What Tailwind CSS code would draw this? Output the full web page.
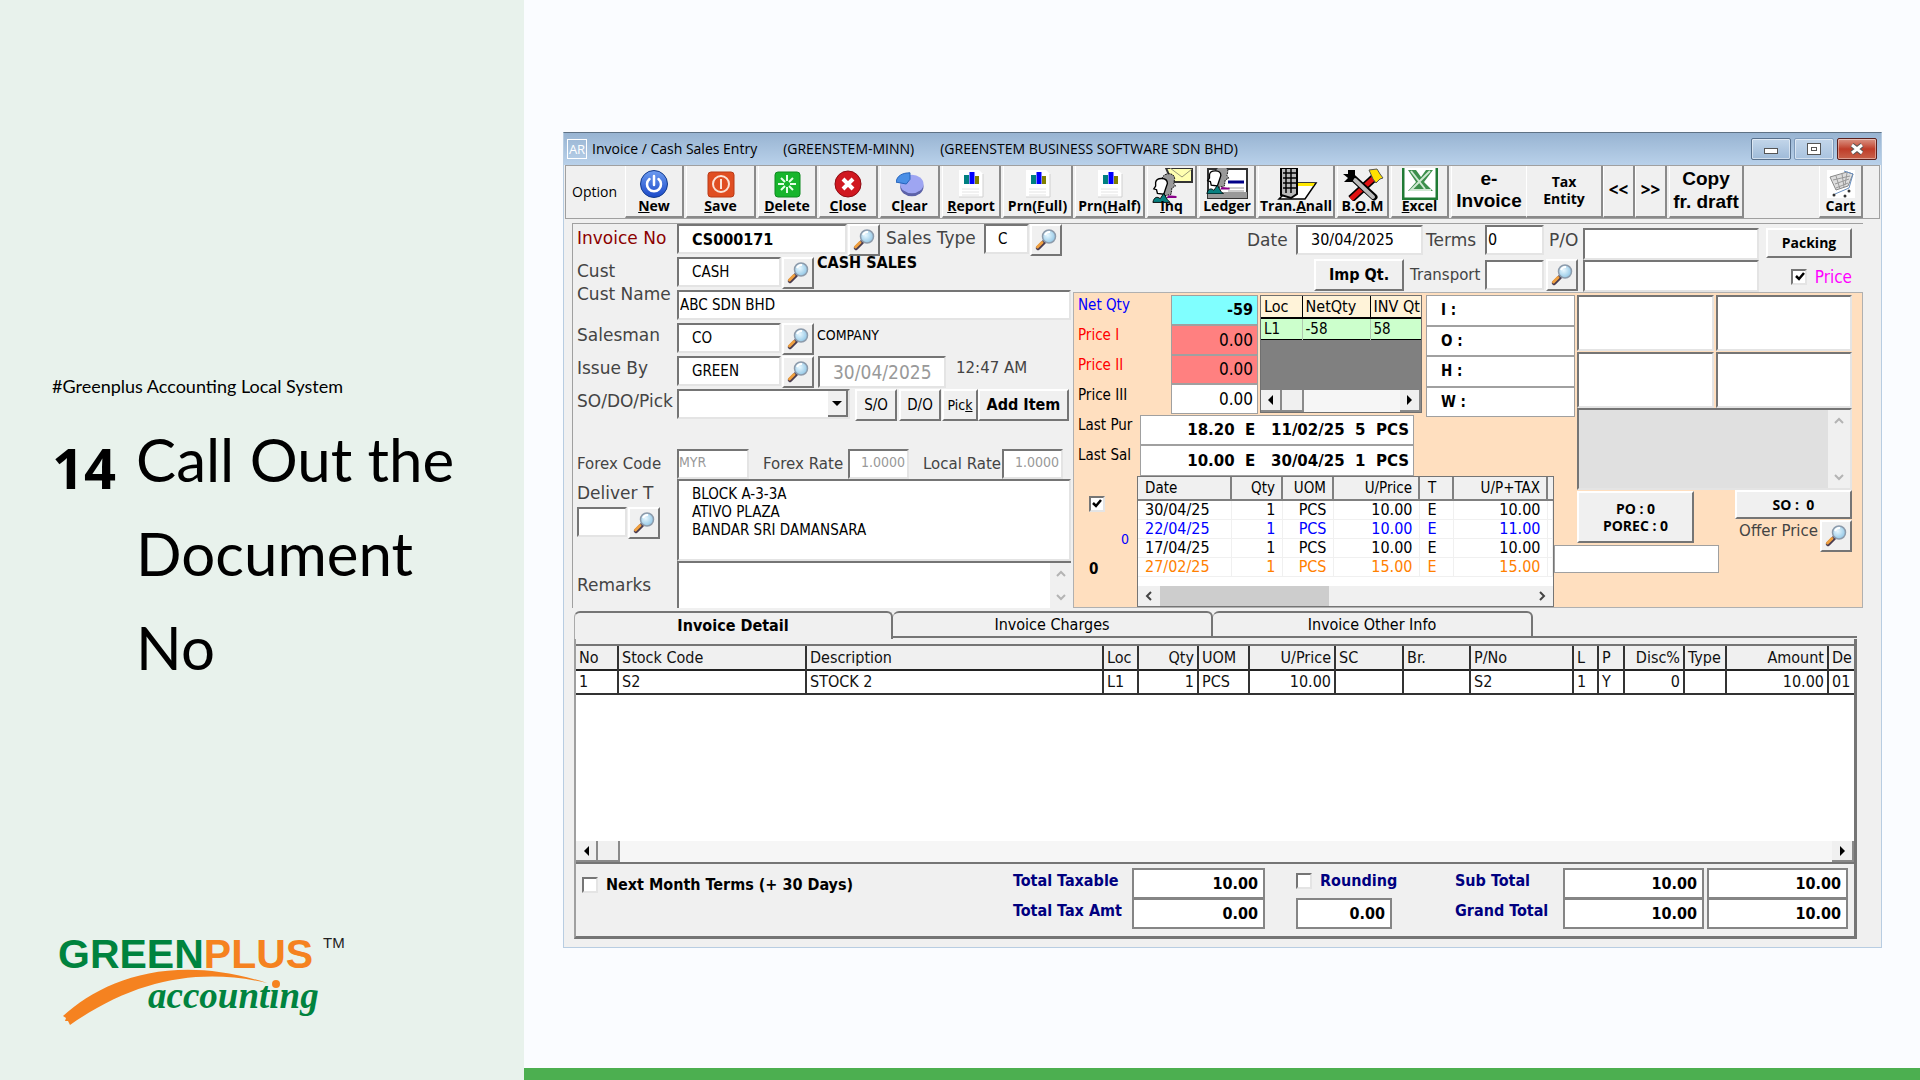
<!DOCTYPE html>
<html lang="en">
<head>
  <meta charset="UTF-8" />
  <title>Greenplus Accounting - Call Out the Document No</title>
  <meta name="viewport" content="width=device-width, initial-scale=1.0" />
  <script src="https://cdn.jsdelivr.net/npm/@tailwindcss/browser@4"></script>
</head>
<body class="flex min-h-screen bg-[#fafcff] text-black">

  <!-- Shared icons -->
  <svg class="absolute h-0 w-0">
    <defs>
      <radialGradient id="glass" cx="40%" cy="40%" r="65%">
        <stop offset="0" stop-color="#e8f8ff" />
        <stop offset="1" stop-color="#8ec4e4" />
      </radialGradient>
      <linearGradient id="blueBall" x1="0" y1="0" x2="0" y2="1">
        <stop offset="0" stop-color="#6d9cf0" />
        <stop offset="1" stop-color="#1b49c8" />
      </linearGradient>
    </defs>
    <symbol id="lens" viewBox="0 0 24 24">
      <path d="M4 20 L10 14" stroke="#4a3c50" stroke-width="4.500" stroke-linecap="round" />
      <path d="M3.500 19 L8 14.500" stroke="#f0a040" stroke-width="3" stroke-linecap="round" />
      <circle cx="15" cy="8.500" r="6.500" fill="url(#glass)" stroke="#8d9bab" stroke-width="1.500" />
      <path d="M11 7a5 5 0 0 1 5-3" stroke="#fff" stroke-width="2" fill="none" />
    </symbol>
    <symbol id="report" viewBox="0 0 28 28">
      <path d="M2 0h20l4 4v23H2z" fill="#fff" />
      <path d="M2 27h24V4" fill="none" stroke="#d0d0d0" />
      <path d="M7 5h5v9H7z" fill="#008080" />
      <path d="M12.500 2h5v12h-5z" fill="#00f" />
      <path d="M18 6h4v8h-4z" fill="#808000" />
      <path d="M5 19h17M5 22h17M5 25h17" stroke="#e4e4e4" />
    </symbol>
    <symbol id="people" viewBox="0 0 32 34">
      <path d="M11 8c1-7 14-8 14 0l-1 5 2 3-4 2-1 7-8 2z" fill="#999" stroke="#000" stroke-dasharray="2 1" />
      <path d="M18 26l9 1v2H16z" fill="#808" />
      <path d="M4 12C5 6 17 6 17 13l-2 6-2 6-7-1-1-4-3-1 2-3z" fill="#fff" stroke="#000" stroke-width="1.500" />
      <path d="M1 34c1-6 5-7 8-4l4-6 4 7 3 3z" fill="#088080" stroke="#000" />
    </symbol>
  </svg>

  <aside class="flex w-[524px] shrink-0 flex-col bg-[#e8f2ec] px-[52px] font-['Lato',sans-serif]">
    <p class="mt-[372px] text-[18px] leading-7">#Greenplus Accounting Local System</p>
    <h1 class="mt-3 flex gap-5 text-[60px] leading-[94px]">
      <b class="pt-2 font-['Open_Sans',sans-serif] text-[56px]">14</b>
      <span>Call Out the Document No</span>
    </h1>
    <svg class="mt-auto mb-[50px] h-[100px] w-[300px]" viewBox="0 0 300 100">
      <g font-family="Liberation Sans, sans-serif">
        <text x="6" y="38" font-size="41" font-weight="700" fill="#00833e">GREEN<tspan fill="#f58220">PLUS</tspan></text>
        <text x="271" y="18" font-size="15" fill="#222">TM</text>
      </g>
      <path d="M11 86C50 50 120 22 215 53C150 38 85 48 18 95L16 91L13 91L14 88Z" fill="#f58220" />
      <text x="96" y="78" font-family="Liberation Serif, serif" font-size="37" font-style="italic" font-weight="700" fill="#00833e">accountıng</text>
      <circle cx="224" cy="54" r="4" fill="#f58220" />
    </svg>
  </aside>

  <main class="flex flex-1 flex-col border-b-[12px] border-[#4caf50] pt-[132px] pr-[38px] pl-[39px]">
    <div class="flex flex-col border border-t-[#5f7285] border-[#b8cde2] bg-[#f0f0f0] pb-2 font-['DejaVu_Sans_Condensed','DejaVu_Sans',sans-serif] text-[15px] leading-5 whitespace-nowrap">

      <!-- Title bar -->
      <header class="flex h-8 items-center bg-linear-to-b from-[#98b4d2] to-[#b9d1ea] pr-1 pl-[3px] font-['Open_Sans',sans-serif] text-[14px]">
        <span class="mr-[5px] flex h-5 w-5 items-center justify-center border border-white text-[13px] text-white">AR</span>
        <span>Invoice / Cash Sales Entry</span>
        <span class="ml-[26px]">(GREENSTEM-MINN)</span>
        <span class="ml-[26px]">(GREENSTEM BUSINESS SOFTWARE SDN BHD)</span>
        <div class="ml-auto flex gap-[3px]">
          <button aria-label="Minimize" class="flex h-[22px] w-10 items-center justify-center rounded-xs border border-[#58708c] bg-linear-to-b from-[#c3d6ea] to-[#9ebad8] ring-1 ring-white/50 ring-inset">
            <span class="mt-1 h-[6px] w-[14px] border border-[#555] bg-white"></span>
          </button>
          <button aria-label="Restore" class="flex h-[22px] w-10 items-center justify-center rounded-xs border border-[#7f9bbb] bg-linear-to-b from-[#c3d6ea] to-[#a9c3df] ring-1 ring-white/50 ring-inset">
            <span class="h-[12px] w-[14px] border border-[#555] bg-white p-[3px]"><span class="block h-1 border border-[#555]"></span></span>
          </button>
          <button aria-label="Close window" class="flex h-[22px] w-10 items-center justify-center rounded-xs border border-[#5a1f1c] bg-linear-to-b from-[#d99384] via-[#bf3c28] to-[#c8614a] ring-1 ring-white/40 ring-inset">
            <svg class="h-3 w-4" viewBox="0 0 16 12"><path d="M3 2l10 8M13 2L3 10" stroke="#555" stroke-width="5" /><path d="M3 2l10 8M13 2L3 10" stroke="#fff" stroke-width="3" /></svg>
          </button>
        </div>
      </header>

      <!-- Toolbar -->
      <nav class="mx-px flex h-[54px] border border-[#a0a0a0] bg-[#f0f0f0] font-['Open_Sans',sans-serif] text-[14px] leading-4 [&>button]:mr-[2px] [&>button]:flex [&>button]:flex-col [&>button]:items-center [&>button]:justify-end [&>button]:border-r-2 [&>button]:border-b-2 [&>button]:border-l [&>button]:border-[#8a8a8a] [&>button]:border-l-white [&>button]:pb-[2px] [&>button]:font-bold [&_svg]:h-7 [&_svg]:w-7">
        <span class="w-[59px] self-center pl-[6px]">Option</span>
        <button class="w-[59px]">
          <svg viewBox="0 0 28 28"><circle cx="14" cy="14" r="13.500" fill="url(#blueBall)" stroke="#123a8c" /><path d="M9.500 9a7 7 0 1 0 9 0M14 6v9" fill="none" stroke="#fff" stroke-width="2.500" stroke-linecap="round" /></svg>
          <span><u>N</u>ew</span>
        </button>
        <button class="w-[70px]">
          <svg viewBox="0 0 28 28"><rect x="1" y="2" width="26" height="25" rx="3" fill="#e04e22" stroke="#b93a17" /><circle cx="14" cy="14" r="8" fill="none" stroke="#fbe3d8" stroke-width="2" /><path d="M14 9v10" stroke="#fbe3d8" stroke-width="2" /></svg>
          <span><u>S</u>ave</span>
        </button>
        <button class="w-[59px]">
          <svg viewBox="0 0 28 28"><rect x="2" y="2" width="25" height="25" rx="3" fill="#17b52c" stroke="#0d8a1e" /><path d="M14 5v6M14 17v6M5 14h6M17 14h6M8 8l4 4M16 16l4 4M20 8l-4 4M12 16l-4 4" stroke="#e6ffe8" stroke-width="2" /></svg>
          <span><u>D</u>elete</span>
        </button>
        <button class="w-[59px]">
          <svg viewBox="0 0 28 28"><circle cx="14" cy="14" r="13" fill="#d01820" stroke="#8d0b12" /><path d="M9 9l10 10M19 9L9 19" stroke="#fff" stroke-width="4" /></svg>
          <span><u>C</u>lose</span>
        </button>
        <button class="w-[60px]">
          <svg viewBox="0 0 30 28"><ellipse cx="17" cy="17" rx="12.500" ry="10" fill="#5c62a8" /><ellipse cx="17" cy="14" rx="12.500" ry="10" fill="#9ea5f2" /><path d="M0 12C1 5 7 2 15 2v7l-4 5z" fill="#4a8fe6" stroke="#205fb8" /></svg>
          <span>C<u>l</u>ear</span>
        </button>
        <button class="w-[59px]"><svg><use href="#report" /></svg><span><u>R</u>eport</span></button>
        <button class="w-[70px]"><svg><use href="#report" /></svg><span>Prn(<u>F</u>ull)</span></button>
        <button class="w-[70px]"><svg><use href="#report" /></svg><span>Prn(<u>H</u>alf)</span></button>
        <button class="relative w-[50px]">
          <svg class="absolute top-[2px] left-1 !h-[36px] !w-[42px]" viewBox="0 0 42 36"><path d="M14 0h26v14H20z" fill="#ffffb0" stroke="#333" stroke-width="2" /><path d="M18 0l12 9L40 1" fill="none" stroke="#997" /><use href="#people" x="0" y="3" width="29" height="32" /></svg>
          <span class="relative"><u>I</u>nq</span>
        </button>
        <button class="relative w-[57px]">
          <svg class="absolute top-[2px] left-1 !h-[32px] !w-[48px]" viewBox="0 0 48 32"><path d="M4 1h39v29H4z" fill="#fff" stroke="#333" stroke-width="2" /><path d="M4 24h39v6H4z" fill="#999" /><path d="M24 14h16" stroke="#008" stroke-width="3" /><path d="M24 20h16M24 23h16" stroke="#999" /><use href="#people" x="2" y="-4" width="28" height="30" /></svg>
          <span class="relative">Ledger</span>
        </button>
        <button class="relative w-[77px]">
          <svg class="absolute top-[2px] left-4 !h-[32px] !w-[44px]" viewBox="0 0 44 32"><path d="M20 15h21L30 31H4z" fill="#fff" stroke="#000" stroke-width="1.500" /><path d="M22 15h18l-2 3H22z" fill="#ffe800" /><path d="M6 0h16v26l-6 4-10-3z" fill="#b8b8b8" stroke="#000" stroke-width="2" /><path d="M8 5h13M8 10h13M8 15h13M8 20h13M11 1v24M16 1v24" stroke="#000" stroke-width="1.500" /></svg>
          <span class="relative">Tran.<u>A</u>nall</span>
        </button>
        <button class="relative w-[52px]">
          <svg class="absolute top-[2px] left-1 !h-[33px] !w-[42px]" viewBox="0 0 42 33"><path d="M34 8L9 31" stroke="#000" stroke-width="8" /><path d="M34 8L9 31" stroke="#e01010" stroke-width="5" /><path d="M10 9l22 20" stroke="#000" stroke-width="7" stroke-linecap="round" /><path d="M13 12l18 17" stroke="#bbb" stroke-width="4" stroke-linecap="round" /><path d="M1 6h5V2h7v7l-3 5H2l4-4z" fill="#000" /><path d="M27 2l8-1 3 5 3 4-3 1-4 4-3-4z" fill="#ffe000" stroke="#555" /></svg>
          <span class="relative">B.<u>O</u>.M</span>
        </button>
        <button class="relative w-[58px]">
          <svg class="absolute top-[2px] left-[10px] !h-[32px] !w-[36px]" viewBox="0 0 36 32"><path d="M1 0v31h34V0" fill="#fff" stroke="#1f7a34" stroke-width="3" /><path d="M6 2h8l5 7 5-7h7L22 14l9 9H6l8-9z" fill="#3d8f4c" /><path d="M9 3l14 18M29 22H9L28 3" stroke="#cfe8d2" stroke-width="2" fill="none" /></svg>
          <span class="relative"><u>E</u>xcel</span>
        </button>
        <button class="!mr-0 w-[75px] !justify-center !border-r-0 font-['Liberation_Sans',sans-serif] text-[19px] leading-[22px]"><span>e-<br />Invoice</span></button>
        <button class="!mr-0 w-[77px] !justify-center leading-[17px]"><span>Tax<br />Entity</span></button>
        <button class="!mr-0 w-8 !justify-center text-[17px]">&lt;&lt;</button>
        <button class="w-8 !justify-center text-[17px]">&gt;&gt;</button>
        <button class="w-[75px] !justify-center font-['Liberation_Sans',sans-serif] text-[19px] leading-[23px]"><span>Copy<br />fr. draft</span></button>
        <button class="!mr-4 ml-auto w-[44px]">
          <svg viewBox="0 0 28 28" class="bg-white"><path d="M3 7l17-5 6 2-5 12-12 4z" fill="#ddd" stroke="#888" /><path d="M6 10l17-4M8 14l14-5M9 18l12-5M9 6l4 13M15 4l2 13M20 3l-2 12" stroke="#999" /><path d="M17 1l9 3-4 14-14 6" fill="none" stroke="#6a90c0" /><circle cx="7" cy="25" r="1.500" fill="#333" /><circle cx="18" cy="26" r="1.500" fill="#333" /><circle cx="22" cy="21" r="1.500" fill="#333" /></svg>
          <span>Car<u>t</u></span>
        </button>
      </nav>

      <!-- Entry form -->
      <form class="mt-1 mr-[18px] ml-2 flex h-[385px] border-t border-l border-[#a0a0a0] font-['DejaVu_Sans',sans-serif] text-[#444] [&_b]:font-['DejaVu_Sans_Condensed',sans-serif] [&_button]:border-2 [&_button]:border-[#757575] [&_button]:border-t-white [&_button]:border-l-white [&_button]:bg-[#f0f0f0] [&_button]:text-black [&_input]:border-2 [&_input]:border-[#e4e4e4] [&_input]:border-t-[#757575] [&_input]:border-l-[#757575] [&_input]:bg-white [&_input]:text-black [&_input::placeholder]:text-[#999]">

        <div class="grid w-[500px] shrink-0 grid-cols-[100px_1fr] grid-rows-[33px_33px_33px_33px_33px_33px_27px_30px_82px_47px] pl-[4px] [&_button]:font-['DejaVu_Sans_Condensed',sans-serif] [&_input]:font-['DejaVu_Sans_Condensed',sans-serif]">
          <label for="invoiceNo" class="text-[17px] leading-7 text-[#8b0000]">Invoice No</label>
          <div class="flex items-start">
            <input id="invoiceNo" class="h-[30px] w-[170px] pl-[13px] text-[16px] font-bold" value="CS000171" />
            <button type="button" aria-label="Find invoice" class="ml-px h-8 w-8 p-[2px]"><svg class="h-6 w-6"><use href="#lens" /></svg></button>
            <label for="salesType" class="ml-[6px] w-[98px] text-[17px] leading-7">Sales Type</label>
            <input id="salesType" class="h-[30px] w-[45px] pl-[12px]" value="C" />
            <button type="button" aria-label="Find sales type" class="ml-px h-8 w-8 p-[2px]"><svg class="h-6 w-6"><use href="#lens" /></svg></button>
          </div>

          <label for="cust" class="text-[17px] leading-7">Cust</label>
          <div class="flex items-start">
            <input id="cust" class="h-[30px] w-[104px] pl-[13px]" value="CASH" />
            <button type="button" aria-label="Find customer" class="ml-px h-8 w-8 p-[2px]"><svg class="h-6 w-6"><use href="#lens" /></svg></button>
            <b class="ml-[3px] text-[16px] leading-3 text-black">CASH SALES</b>
          </div>

          <label for="custName" class="text-[17px] leading-2">Cust Name</label>
          <input id="custName" class="h-[30px] w-[394px] pl-px" value="ABC SDN BHD" />

          <label for="salesman" class="text-[17px] leading-6">Salesman</label>
          <div class="flex items-start">
            <input id="salesman" class="h-[30px] w-[104px] pl-[13px]" value="CO" />
            <button type="button" aria-label="Find salesman" class="ml-px h-8 w-8 p-[2px]"><svg class="h-6 w-6"><use href="#lens" /></svg></button>
            <span class="ml-[3px] font-['DejaVu_Sans_Condensed',sans-serif] text-[14px] leading-6 text-black">COMPANY</span>
          </div>

          <label for="issueBy" class="text-[17px] leading-6">Issue By</label>
          <div class="flex items-start">
            <input id="issueBy" class="h-[30px] w-[104px] pl-[13px]" value="GREEN" />
            <button type="button" aria-label="Find issuer" class="ml-px h-8 w-8 p-[2px]"><svg class="h-6 w-6"><use href="#lens" /></svg></button>
            <input aria-label="Issue date" class="ml-1 h-8 w-[128px] pl-[13px] text-[19px]" placeholder="30/04/2025" disabled />
            <span class="ml-[10px] leading-6">12:47 AM</span>
          </div>

          <label for="pick" class="text-[17px] leading-6">SO/DO/Pick</label>
          <div class="flex items-start">
            <div class="relative">
              <select id="pick" class="h-[30px] w-[173px] appearance-none border-2 border-[#e4e4e4] border-t-[#757575] border-l-[#757575] bg-white"><option></option></select>
              <span class="pointer-events-none absolute top-[2px] right-[2px] flex h-[26px] w-[20px] items-center justify-center border-r-2 border-b-2 border-[#757575] bg-[#f0f0f0]">
                <svg class="h-[5px] w-[10px]" viewBox="0 0 10 5"><path d="M0 0h10L5 5z" /></svg>
              </span>
            </div>
            <button type="button" class="ml-[5px] h-8 w-[42px]">S/O</button>
            <button type="button" class="ml-[2px] h-8 w-[42px]">D/O</button>
            <button type="button" class="ml-px h-8 w-[36px] text-[14px]">Pic<u>k</u></button>
            <button type="button" class="h-8 w-[91px] text-[16px] font-bold">Add Item</button>
          </div>

          <div class="col-span-2"></div>

          <label for="forex" class="self-center">Forex Code</label>
          <div class="flex items-center">
            <input id="forex" class="h-[30px] w-[72px] pb-1 text-[14px]" placeholder="MYR" disabled />
            <label for="forexRate" class="ml-[14px] w-[85px]">Forex Rate</label>
            <input id="forexRate" class="h-[30px] w-[61px] pr-[2px] pb-1 text-right text-[14px]" placeholder="1.0000" disabled />
            <label for="localRate" class="ml-[14px] w-[79px]">Local Rate</label>
            <input id="localRate" class="h-[30px] w-[61px] pr-[2px] pb-1 text-right text-[14px]" placeholder="1.0000" disabled />
          </div>

          <div>
            <label for="deliver" class="text-[17px] leading-7">Deliver T</label>
            <div class="flex">
              <input id="deliver" class="h-[30px] w-[50px]" />
              <button type="button" aria-label="Find delivery address" class="ml-px h-8 w-8 p-[2px]"><svg class="h-6 w-6"><use href="#lens" /></svg></button>
            </div>
          </div>
          <textarea aria-label="Delivery address" class="w-[394px] resize-none overflow-hidden border-2 border-[#e4e4e4] border-t-[#757575] border-l-[#757575] bg-white pt-1 pl-[13px] font-['DejaVu_Sans_Condensed',sans-serif] text-[15px] leading-[18px] text-black">BLOCK A-3-3A
ATIVO PLAZA
BANDAR SRI DAMANSARA</textarea>

          <label for="remarks" class="self-center text-[17px]">Remarks</label>
          <div class="flex w-[394px]">
            <textarea id="remarks" class="h-full flex-1 resize-none overflow-hidden border-t-2 border-l-2 border-[#757575] bg-white"></textarea>
            <div class="flex w-[21px] flex-col items-center justify-around border-t-2 border-t-[#757575] bg-[#f0f0f0]">
              <svg class="h-2 w-[10px]" viewBox="0 0 10 8"><path d="M1 6l4-4 4 4" fill="none" stroke="#b4b4b4" stroke-width="2" /></svg>
              <svg class="h-2 w-[10px]" viewBox="0 0 10 8"><path d="M1 2l4 4 4-4" fill="none" stroke="#b4b4b4" stroke-width="2" /></svg>
            </div>
          </div>
        </div>

        <div class="flex min-w-0 flex-1 flex-col">
          <div class="flex h-[68px] justify-end pr-[11px]">
            <div class="flex flex-col items-end gap-1">
              <div class="flex h-[31px] items-center text-[17px]">
                <label for="date" class="w-[49px]">Date</label>
                <input id="date" class="h-[30px] w-[127px] pl-[13px] font-['DejaVu_Sans_Condensed',sans-serif] text-[16px]" value="30/04/2025" />
                <label for="terms" class="w-[62px] pl-[3px]">Terms</label>
                <input id="terms" class="h-[30px] w-[59px] pl-px font-['DejaVu_Sans_Condensed',sans-serif] text-[16px]" value="0" />
                <label for="po" class="w-[39px] pl-[5px]">P/O</label>
              </div>
              <div class="flex h-8 items-center pr-[5px]">
                <button type="button" class="h-8 w-[90px] font-['DejaVu_Sans_Condensed',sans-serif] text-[16px] font-bold">Imp Qt.</button>
                <label for="transport" class="w-[81px] pl-[6px]">Transport</label>
                <input id="transport" class="h-[30px] w-[59px]" />
                <button type="button" aria-label="Find transport" class="ml-[2px] h-8 w-8 p-[2px]"><svg class="h-6 w-6"><use href="#lens" /></svg></button>
              </div>
            </div>
            <div class="mr-[7px] flex flex-col pt-1">
              <input id="po" class="h-8 w-[176px]" />
              <input aria-label="P/O line 2" class="h-8 w-[176px]" />
            </div>
            <div class="flex w-[86px] flex-col items-end gap-[9px] pt-1">
              <button type="button" class="h-[30px] w-full font-['Open_Sans',sans-serif] text-[14px] font-bold">Packing</button>
              <label class="relative flex items-center gap-2 font-['DejaVu_Sans_Condensed',sans-serif] text-[17px] text-[#f0f]">
                <input type="checkbox" checked class="h-4 w-4 appearance-none" />
                <svg class="absolute left-1 h-[10px] w-[10px]" viewBox="0 0 10 10"><path d="M1 4l3 3 5-6" fill="none" stroke="#000" stroke-width="2.500" /></svg>
                Price
              </label>
            </div>
          </div>

          <!-- Stock and price history -->
          <div class="grid flex-1 grid-cols-[352px_128px_23px_1fr] grid-rows-[122px_130px_1fr] border border-[#b0b0b0] bg-[#ffdfbf] font-['DejaVu_Sans_Condensed',sans-serif]">
            <div class="flex pt-[2px] pl-1">
              <div class="grid h-[120px] w-[93px] grid-rows-4">
                <label for="netQty" class="text-[#00f]">Net Qty</label>
                <label for="price1" class="text-[#f00]">Price I</label>
                <label for="price2" class="text-[#f00]">Price II</label>
                <label for="price3" class="text-black">Price III</label>
              </div>
              <div class="flex h-[119px] w-[87px] flex-col text-[17px] [&_input]:min-h-0 [&_input]:w-full [&_input]:flex-1 [&_input]:!border [&_input]:!border-[#a0a0a0] [&_input]:pr-1 [&_input]:text-right">
                <input id="netQty" class="!bg-[#80ffff] text-[16px] font-bold" value="-59" />
                <input id="price1" class="!bg-[#ff8080]" value="0.00" />
                <input id="price2" class="!bg-[#ff8080]" value="0.00" />
                <input id="price3" value="0.00" />
              </div>
              <div class="ml-[2px] flex h-[118px] w-[162px] flex-col border border-[#707070] bg-[#808080]">
                <table class="w-full table-fixed border-collapse text-left text-[16px] text-black">
                  <thead>
                    <tr class="h-[22px] border-b-2 border-black bg-[#fff3d9]">
                      <th class="w-[41px] border-r border-black pl-[3px] font-normal">Loc</th>
                      <th class="w-[68px] border-r border-black pl-[3px] font-normal">NetQty</th>
                      <th class="overflow-hidden pl-[3px] font-normal">INV Qt</th>
                    </tr>
                  </thead>
                  <tbody>
                    <tr class="h-[21px] border-b border-black bg-[#ccffcc] text-[15px]">
                      <td class="border-r border-[#b0c8b0] pl-[3px]">L1</td>
                      <td class="border-r border-[#b0c8b0] pl-[3px]">-58</td>
                      <td class="pl-[3px]">58</td>
                    </tr>
                  </tbody>
                </table>
                <div class="mt-auto flex h-[22px] justify-between bg-[#f6f6f6]">
                  <div class="flex">
                    <span class="flex w-[21px] items-center justify-center border-r-2 border-b-2 border-[#8a8a8a] bg-[#f0f0f0]"><svg class="h-[10px] w-[5px]" viewBox="0 0 5 10"><path d="M5 0v10L0 5z" /></svg></span>
                    <span class="w-[22px] border-r-2 border-b-2 border-[#8a8a8a] bg-[#f0f0f0]"></span>
                  </div>
                  <span class="flex w-[21px] items-center justify-center border-r-2 border-b-2 border-[#8a8a8a] bg-[#f0f0f0]"><svg class="h-[10px] w-[5px]" viewBox="0 0 5 10"><path d="M0 0v10l5-5z" /></svg></span>
                </div>
              </div>
            </div>

            <div class="col-span-2 mt-[2px] flex h-[122px] w-[149px] flex-col text-[15px] font-bold text-black">
              <span class="flex-1 border border-[#a0a0a0] bg-white pt-1 pl-[14px]">I :</span>
              <span class="flex-1 border border-[#a0a0a0] bg-white pt-1 pl-[14px]">O :</span>
              <span class="flex-1 border border-[#a0a0a0] bg-white pt-1 pl-[14px]">H :</span>
              <span class="flex-1 border border-[#a0a0a0] bg-white pt-1 pl-[14px]">W :</span>
            </div>

            <div class="col-span-2 col-start-1 row-span-2 row-start-2 flex flex-col">
              <div class="flex h-[30px] pl-1 text-black">
                <label for="lastPur" class="w-[62px]">Last Pur</label>
                <input id="lastPur" class="w-[274px] !border !border-[#a0a0a0] pr-1 text-right font-['DejaVu_Sans',sans-serif] font-bold" value="18.20&nbsp; E &nbsp; 11/02/25&nbsp; 5 &nbsp;PCS" />
              </div>
              <div class="flex h-[31px] pl-1 text-black">
                <label for="lastSal" class="w-[62px]">Last Sal</label>
                <input id="lastSal" class="w-[274px] !border !border-[#a0a0a0] pr-1 text-right font-['DejaVu_Sans',sans-serif] font-bold" value="10.00&nbsp; E &nbsp; 30/04/25&nbsp; 1 &nbsp;PCS" />
              </div>
              <div class="flex flex-1">
                <div class="relative w-[63px] pt-5 pl-[15px]">
                  <input type="checkbox" checked aria-label="Show history" class="block h-4 w-4 appearance-none" />
                  <svg class="absolute top-[23px] left-[18px] h-[10px] w-[10px]" viewBox="0 0 10 10"><path d="M1 4l3 3 5-6" fill="none" stroke="#000" stroke-width="2.500" /></svg>
                  <span class="mt-[17px] block pr-2 text-right text-[14px] text-[#00f]">0</span>
                  <b class="mt-[10px] block text-black">0</b>
                </div>
                <div class="flex flex-1 flex-col border border-[#757575] bg-white">
                  <table class="w-full table-fixed border-collapse text-[15px] text-black">
                    <thead>
                      <tr class="h-[23px] border-b-2 border-[#808080] bg-[#f0f0f0]">
                        <th class="w-[93px] border-r-2 border-[#808080] pl-[7px] text-left font-normal">Date</th>
                        <th class="w-[51px] border-r-2 border-[#808080] pr-[6px] text-right font-normal">Qty</th>
                        <th class="w-[51px] border-r-2 border-[#808080] pr-[6px] text-right font-normal">UOM</th>
                        <th class="w-[86px] border-r-2 border-[#808080] pr-[6px] text-right font-normal">U/Price</th>
                        <th class="w-[34px] border-r-2 border-[#808080] pl-2 text-left font-normal">T</th>
                        <th class="w-[94px] border-r-2 border-[#808080] pr-[6px] text-right font-normal">U/P+TAX</th>
                        <th></th>
                      </tr>
                    </thead>
                    <tbody class="text-right text-[16px] [&_td]:border-r [&_td]:border-b [&_td]:border-[#f0f0f0] [&_td]:pr-[6px] [&_td]:leading-[18px] [&_td:first-child]:pl-[7px] [&_td:first-child]:text-left [&_td:nth-child(5)]:pl-2 [&_td:nth-child(5)]:text-left">
                      <tr><td>30/04/25</td><td>1</td><td>PCS</td><td>10.00</td><td>E</td><td>10.00</td><td></td></tr>
                      <tr class="text-[#00f]"><td>22/04/25</td><td>1</td><td>PCS</td><td>10.00</td><td>E</td><td>11.00</td><td></td></tr>
                      <tr><td>17/04/25</td><td>1</td><td>PCS</td><td>10.00</td><td>E</td><td>10.00</td><td></td></tr>
                      <tr class="text-[#ff8000]"><td>27/02/25</td><td>1</td><td>PCS</td><td>15.00</td><td>E</td><td>15.00</td><td></td></tr>
                    </tbody>
                  </table>
                  <div class="mt-auto flex h-5 items-center bg-[#f0f0f0]">
                    <svg class="mx-[6px] h-[10px] w-[10px]" viewBox="0 0 10 10"><path d="M7 1L3 5l4 4" fill="none" stroke="#444" stroke-width="2" /></svg>
                    <span class="h-full w-[169px] bg-[#cdcdcd]"></span>
                    <svg class="mr-[6px] ml-auto h-[10px] w-[10px]" viewBox="0 0 10 10"><path d="M3 1l4 4-4 4" fill="none" stroke="#444" stroke-width="2" /></svg>
                  </div>
                </div>
              </div>
            </div>

            <div class="col-start-4 row-span-2 row-start-1 pt-[2px] pr-[10px]">
              <div class="grid grid-cols-2 gap-x-[2px] gap-y-px [&_input]:h-14 [&_input]:w-full">
                <input aria-label="Info 1" /><input aria-label="Info 2" />
                <input aria-label="Info 3" /><input aria-label="Info 4" />
              </div>
              <div class="flex h-[82px] border-2 border-[#e4e4e4] border-t-[#757575] border-l-[#757575] bg-[#e0e0e0]">
                <div class="ml-auto flex w-[22px] flex-col items-center justify-between bg-[#f0f0f0] py-[7px]">
                  <svg class="h-2 w-[10px]" viewBox="0 0 10 8"><path d="M1 6l4-4 4 4" fill="none" stroke="#b4b4b4" stroke-width="2" /></svg>
                  <svg class="h-2 w-[10px]" viewBox="0 0 10 8"><path d="M1 2l4 4 4-4" fill="none" stroke="#b4b4b4" stroke-width="2" /></svg>
                </div>
              </div>
              <div class="flex justify-between font-['Open_Sans',sans-serif] text-[14px] leading-[17px]">
                <button type="button" class="mt-px h-[52px] w-[117px] font-bold">PO : 0<br />POREC : 0</button>
                <div class="flex flex-col items-end">
                  <button type="button" class="h-[29px] w-[117px] font-bold">SO :&nbsp; 0</button>
                  <div class="flex pt-px font-['DejaVu_Sans',sans-serif] text-[15px]">
                    <label for="offer" class="pt-[3px] pr-[2px]">Offer Price</label>
                    <button type="button" aria-label="Find offer price" class="h-8 w-8 p-[2px]"><svg class="h-6 w-6"><use href="#lens" /></svg></button>
                  </div>
                </div>
              </div>
            </div>
            <input id="offer" class="col-span-2 col-start-3 row-start-3 h-7 w-[165px] !border !border-[#a0a0a0]" />
          </div>
        </div>
      </form>

      <!-- Tabs -->
      <section class="mt-[3px] mr-6 ml-[10px] flex flex-col">
        <div class="flex h-[28px] items-start text-[16px] text-black">
          <button class="h-full w-[319px] rounded-t-md border-t-2 border-r-2 border-l border-[#757575] border-l-[#aaa] font-bold">Invoice Detail</button>
          <button class="h-[27px] w-[320px] rounded-t-md border-t-2 border-r-2 border-b-2 border-[#757575]">Invoice Charges</button>
          <button class="h-[27px] w-[320px] rounded-t-md border-t-2 border-r-2 border-b-2 border-[#757575]">Invoice Other Info</button>
          <span class="h-[27px] flex-1 border-b-2 border-[#757575]"></span>
        </div>

        <div class="border-r-3 border-b-3 border-l-2 border-[#757575] border-l-[#a0a0a0] pt-[5px]">
          <div class="flex h-[220px] flex-col border-t-2 border-b-2 border-[#757575] bg-white">
            <table class="w-full table-fixed border-collapse text-left text-[16px] text-[#111] [&_td]:overflow-hidden [&_td]:border-r-2 [&_td]:border-[#333] [&_td]:px-[3px] [&_th]:overflow-hidden [&_th]:border-r-2 [&_th]:border-[#333] [&_th]:px-[3px] [&_th]:font-normal">
              <thead>
                <tr class="h-6 border-b-2 border-[#222] bg-[#f0f0f0]">
                  <th class="w-[42px]">No</th>
                  <th class="w-[188px]">Stock Code</th>
                  <th>Description</th>
                  <th class="w-[35px]">Loc</th>
                  <th class="w-[60px] text-right">Qty</th>
                  <th class="w-[51px]">UOM</th>
                  <th class="w-[86px] text-right">U/Price</th>
                  <th class="w-[68px]">SC</th>
                  <th class="w-[67px]">Br.</th>
                  <th class="w-[103px]">P/No</th>
                  <th class="w-[25px]">L</th>
                  <th class="w-[26px]">P</th>
                  <th class="w-[60px] text-right">Disc%</th>
                  <th class="w-[42px]">Type</th>
                  <th class="w-[102px] text-right">Amount</th>
                  <th class="w-[26px] !border-r-0">De</th>
                </tr>
              </thead>
              <tbody>
                <tr class="h-6 border-b-2 border-[#333]">
                  <td>1</td><td>S2</td><td>STOCK 2</td><td>L1</td><td class="text-right">1</td><td>PCS</td><td class="text-right">10.00</td><td></td><td></td><td>S2</td><td>1</td><td>Y</td><td class="text-right">0</td><td></td><td class="text-right">10.00</td><td class="!border-r-0">01</td>
                </tr>
              </tbody>
            </table>
            <div class="mt-auto flex h-[21px] justify-between bg-[#f6f6f6]">
              <div class="flex">
                <span class="flex w-[22px] items-center justify-center border-r-2 border-b-2 border-[#8a8a8a] bg-[#f0f0f0]"><svg class="h-[10px] w-[5px]" viewBox="0 0 5 10"><path d="M5 0v10L0 5z" /></svg></span>
                <span class="w-[22px] border-r-2 border-b-2 border-[#8a8a8a] bg-[#f0f0f0]"></span>
              </div>
              <span class="flex w-[22px] items-center justify-center border-r-2 border-b-2 border-[#8a8a8a] bg-[#f0f0f0]"><svg class="h-[10px] w-[5px]" viewBox="0 0 5 10"><path d="M0 0v10l5-5z" /></svg></span>
            </div>
          </div>

          <!-- Totals -->
          <div class="flex h-[72px] justify-between pt-1 pr-[6px] pl-[6px] text-[16px] font-bold text-[#000080] [&_input]:h-[31px] [&_input]:border-2 [&_input]:border-[#858585] [&_input]:bg-white [&_input]:pr-[5px] [&_input]:text-right [&_input]:text-black [&_input[type=checkbox]]:h-4 [&_input[type=checkbox]]:w-4 [&_input[type=checkbox]]:appearance-none [&_input[type=checkbox]]:border-[#e4e4e4] [&_input[type=checkbox]]:border-t-[#757575] [&_input[type=checkbox]]:border-l-[#757575]">
            <label class="flex h-[34px] w-[400px] items-center gap-2 text-black"><input type="checkbox" />Next Month Terms (+ 30 Days)</label>
            <div class="grid grid-cols-[119px_133px] grid-rows-[30px_31px]">
              <label for="taxable" class="pt-[3px]">Total Taxable</label>
              <input id="taxable" value="10.00" />
              <label for="taxAmt" class="pt-[3px]">Total Tax Amt</label>
              <input id="taxAmt" value="0.00" />
            </div>
            <div class="grid w-[128px] grid-rows-[30px_31px]">
              <label class="flex items-center gap-2 pb-1"><input type="checkbox" />Rounding</label>
              <input aria-label="Rounding amount" class="w-[96px]" value="0.00" />
            </div>
            <div class="grid grid-cols-[105px_141px_141px] grid-rows-[30px_31px] gap-x-[3px]">
              <label for="subTotal" class="pt-[3px]">Sub Total</label>
              <input id="subTotal" value="10.00" />
              <input aria-label="Sub total local" value="10.00" />
              <label for="grandTotal" class="pt-[3px]">Grand Total</label>
              <input id="grandTotal" value="10.00" />
              <input aria-label="Grand total local" value="10.00" />
            </div>
          </div>
        </div>
      </section>
    </div>
  </main>

</body>
</html>
